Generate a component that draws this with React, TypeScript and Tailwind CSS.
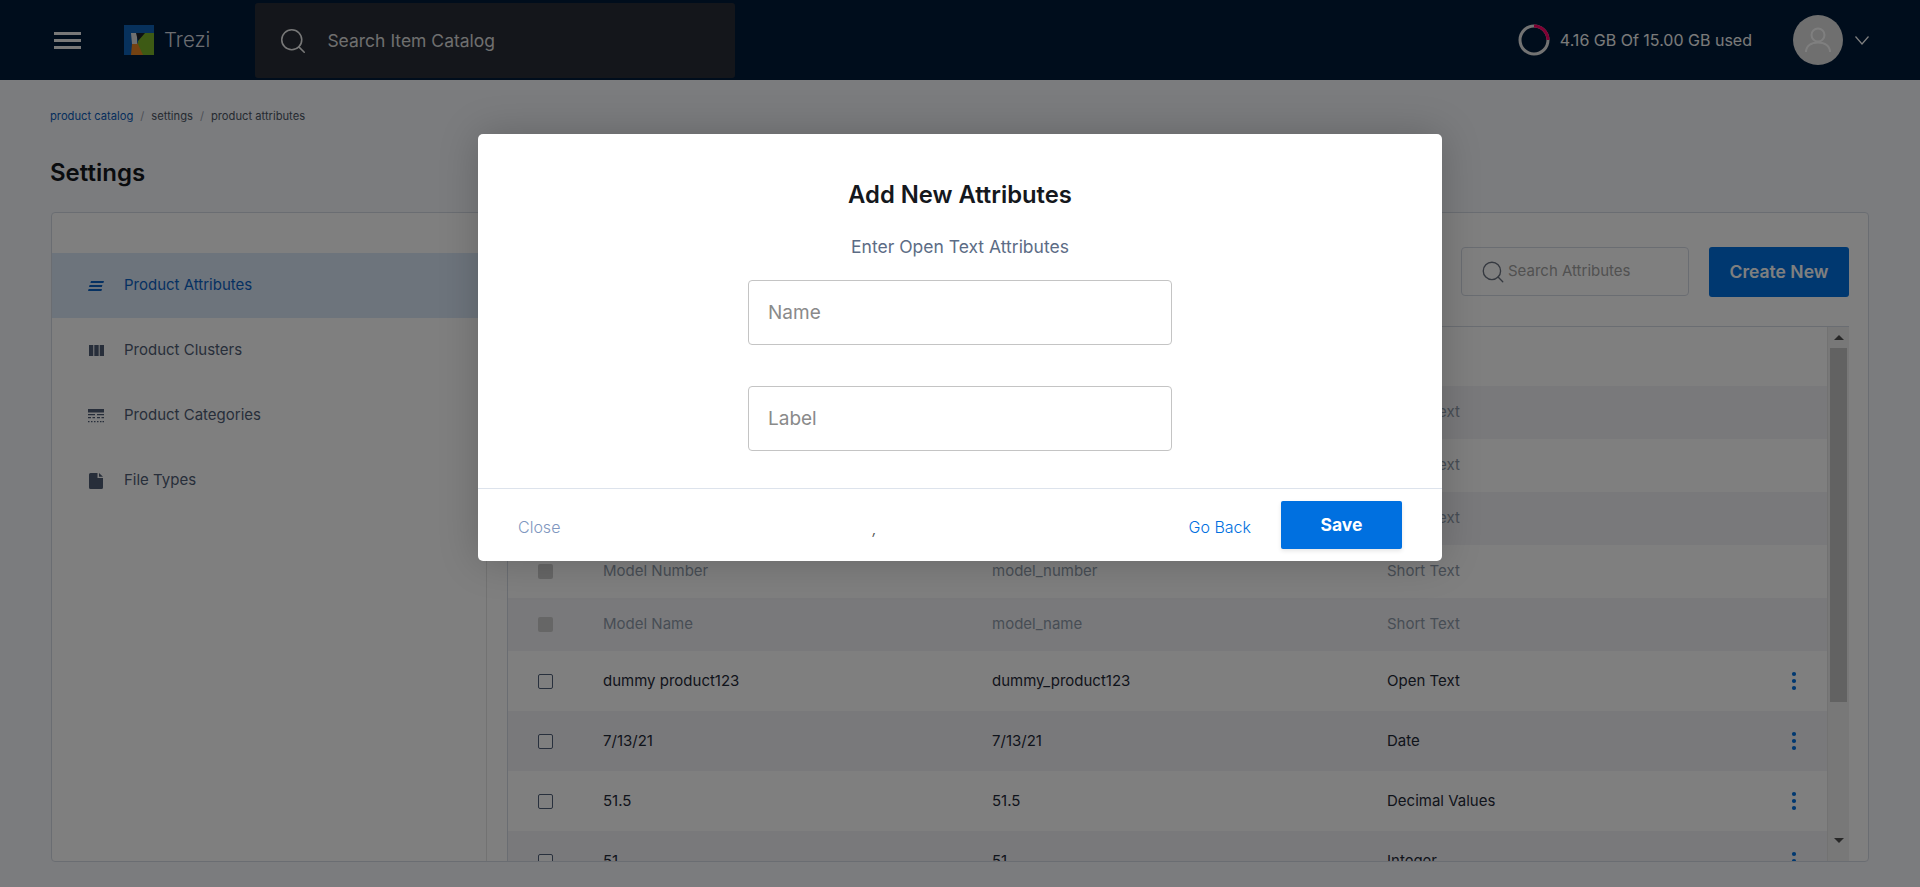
import React from 'react';
import { Search } from 'lucide-react';

const lockedRows = ['', '', '', 'Model Number', 'Model Name'];
const lockedKeys = ['', '', '', 'model_number', 'model_name'];

const rows = [
  { name: 'dummy product123', key: 'dummy_product123', type: 'Open Text' },
  { name: '7/13/21', key: '7/13/21', type: 'Date' },
  { name: '51.5', key: '51.5', type: 'Decimal Values' },
  { name: '51', key: '51', type: 'Integer' },
];

const sideItems = ['Product Attributes', 'Product Clusters', 'Product Categories', 'File Types'];

const SideIcon = ({ index }: { index: number }) => {
  if (index === 0) {
    return (
      <svg width="16" height="10" viewBox="0 0 16 10" fill="currentColor">
        <path d="M3 0h13l-.6 2H2.4zM1.6 4h12.8l-.6 2H1zM.6 8H14l-.6 2H0z" />
      </svg>
    );
  }
  if (index === 1) {
    return (
      <svg width="15" height="11" viewBox="0 0 15 11" fill="currentColor">
        <path d="M0 0h4.300v11H0zM5.300 0h4.400v11H5.300zM10.700 0H15v11h-4.300z" />
      </svg>
    );
  }
  if (index === 2) {
    return (
      <svg width="16" height="14" viewBox="0 0 16 14" fill="currentColor">
        <path d="M0 0h16v3.500H0zM0 5h7v1.200H0zM9 5h7v1.200H9zM0 8h3v1.200H0zM4.500 8H7v1.200H4.500zM9 8h3v1.200H9zM13.500 8H16v1.200h-2.500zM0 12h1.500v1.200H0zM3 12h1.500v1.200H3zM6 12h1.500v1.200H6zM9 12h1.500v1.200H9zM12 12h1.500v1.200H12zM14.500 12H16v1.200h-1.500z" />
      </svg>
    );
  }
  return (
    <svg width="14" height="16" viewBox="0 0 14 16" fill="currentColor">
      <path d="M1.500 0H8.500V5h5.500v9.500A1.500 1.500 0 0 1 12.500 16h-11A1.500 1.500 0 0 1 0 14.500v-13A1.500 1.500 0 0 1 1.500 0zM10 0l4 3.800h-4z" />
    </svg>
  );
};

const Dots = () => (
  <svg width="6" height="20" viewBox="0 0 6 20" fill="#0070e0">
    <circle cx="3" cy="3" r="2.100" />
    <circle cx="3" cy="10" r="2.100" />
    <circle cx="3" cy="17" r="2.100" />
  </svg>
);

const Logo = () => (
  <svg width="30" height="30" viewBox="0 0 30 30" className="ml-[43px] shrink-0">
    <rect width="30" height="30" fill="#0e62b8" />
    <path d="M20 8h10v22H14V15z" fill="#7ab428" />
    <path d="M7 30l1-11 5-2 6 13z" fill="#e88425" />
    <path d="M7 8h6v11H8z" fill="#e0e0e0" />
    <path d="M12 8h9l-7 8z" fill="#1a2028" />
  </svg>
);

const Header = () => (
  <header className="h-20 bg-[#001a38] flex items-center">
    <svg width="27" height="17" viewBox="0 0 27 17" fill="#f0f0f0" className="ml-[54px] shrink-0">
      <rect width="27" height="3" />
      <rect y="7" width="27" height="3" />
      <rect y="14" width="27" height="3" />
    </svg>
    <Logo />
    <span className="ml-[10px] text-[20.5px] text-[#d8dce2] font-light">Trezi</span>
    <div className="ml-[45px] w-[480px] h-[75px] mt-[1px] bg-[#282d36] rounded-[3px] flex items-center pl-[23px]">
      <Search className="w-[30px] h-[30px] text-[#f0f0f0]" strokeWidth={1.25} />
      <span className="ml-[19px] mt-[1px] text-[17.5px] text-[#dedede]">Search Item Catalog</span>
    </div>
    <div className="ml-auto flex items-center">
      <svg width="32" height="32" viewBox="0 0 32 32" fill="none">
        <circle cx="16" cy="16" r="14" stroke="#e6e6e6" strokeWidth="3" />
        <path d="M16 2A14 14 0 0 1 30 16" stroke="#ff0066" strokeWidth="3" />
      </svg>
      <span className="ml-[10px] text-[16px] text-[#f5f5f5]">4.16 GB Of 15.00 GB used</span>
      <div className="ml-[41px] w-[50px] h-[50px] rounded-full bg-[#dedede] flex items-center justify-center">
        <svg width="28" height="28" viewBox="0 0 28 28" fill="none" stroke="#ffffff" strokeWidth="2">
          <circle cx="14" cy="9" r="6.500" />
          <path d="M2 26c0-6 5-9.500 12-9.500S26 20 26 26" />
        </svg>
      </div>
      <svg width="14" height="9" viewBox="0 0 14 9" fill="none" stroke="#ffffff" strokeWidth="1.200" className="ml-[12px] mr-[51px]">
        <path d="M.5.500 7 8 13.500.5" />
      </svg>
    </div>
  </header>
);

const Table = () => (
  <div className="mt-[29px] mr-[19px] flex-1 min-h-0 border-t border-l border-[#d5dbe5] flex overflow-hidden">
    <div className="flex-1 border-r border-[#e4e4e4]">
      <div className="h-[59px]" />
      {lockedRows.map((name, i) => (
        <div key={i} className={`h-[53px] flex items-center text-[15px] text-[#8f9baa] ${i % 2 === 0 ? 'bg-[#f3f3f7]' : 'bg-white'}`}>
          <span className="ml-[30px] w-[15px] h-[15px] rounded-[2px] bg-[#cdcdcd]" />
          <span className="ml-[50px] w-[389px]">{name}</span>
          <span className="w-[395px]">{lockedKeys[i]}</span>
          <span>Short Text</span>
        </div>
      ))}
      {rows.map((row, i) => (
        <div key={row.key} className={`h-[60px] flex items-center text-[15px] text-[#1f2937] ${i % 2 === 0 ? 'bg-white' : 'bg-[#f3f3f7]'}`}>
          <span className="ml-[30px] w-[15px] h-[15px] rounded-[2px] border border-[#51607a] bg-white" />
          <span className="ml-[50px] w-[389px]">{row.name}</span>
          <span className="w-[395px]">{row.key}</span>
          <span className="w-[404px]">{row.type}</span>
          <Dots />
        </div>
      ))}
    </div>
    <div className="w-[21px] bg-[#f0f0f0] flex flex-col items-center shrink-0">
      <div className="h-[21px] flex items-center justify-center">
        <span className="w-0 h-0 border-x-[5px] border-x-transparent border-b-[5px] border-b-[#505050]" />
      </div>
      <div className="w-[17px] h-[354px] bg-[#c4c4c4]" />
      <div className="mt-auto h-[24px] flex items-start justify-center pt-[1px]">
        <span className="w-0 h-0 border-x-[5px] border-x-transparent border-t-[5px] border-t-[#505050]" />
      </div>
    </div>
  </div>
);

const Modal = () => (
  <div className="absolute left-[478px] top-[134px] w-[964px] h-[427px] bg-white rounded-[5px] shadow-[0_0_40px_rgba(0,0,0,0.2)] flex flex-col">
    <div className="flex-1 flex flex-col items-center">
      <h2 className="mt-[46px] text-[23.800px] leading-[30px] font-semibold text-[#15181d]">Add New Attributes</h2>
      <p className="mt-[25px] text-[17.5px] leading-[24px] text-[#5c6c85]">Enter Open Text Attributes</p>
      <input
        placeholder="Name"
        readOnly
        className="mt-[21px] w-[424px] h-[65px] px-[19px] text-[19px] rounded-[4px] border border-[#c4c4c4] outline-none placeholder:text-[#8a8a8a]"
      />
      <input
        placeholder="Label"
        readOnly
        className="mt-[41px] w-[424px] h-[65px] px-[19px] text-[19px] rounded-[4px] border border-[#c4c4c4] outline-none placeholder:text-[#8a8a8a]"
      />
    </div>
    <div className="h-[73px] border-t border-[#dde3ec] flex items-center pl-[40px] pr-[40px]">
      <span className="mt-[4px] text-[16px] text-[#7f97c0] font-light">Close</span>
      <span className="ml-[312px] mt-[6px] text-[14px] italic text-[#555555]">,</span>
      <span className="ml-auto mt-[4px] text-[16px] text-[#0070e0] font-light">Go Back</span>
      <button className="ml-[30px] w-[121px] h-[48px] rounded-[2px] bg-[#0070e0] text-white text-[17.5px] font-bold shadow-[0_2px_4px_rgba(0,0,0,0.1)]">Save</button>
    </div>
  </div>
);

export default function App() {
  return (
    <div className="relative w-[1920px] h-[887px] overflow-hidden bg-[#f7f9fd] font-['Inter',sans-serif]">
      <Header />
      <main className="px-[50px]">
        <nav className="pt-[29px] h-[44px] flex items-center gap-[7px] text-[11.2px] text-[#4b5563]">
          <span className="text-[#0b5cb8]">product catalog</span>
          <span className="text-[#9aa1ad]">/</span>
          <span>settings</span>
          <span className="text-[#9aa1ad]">/</span>
          <span>product attributes</span>
        </nav>
        <h1 className="mt-[33px] text-[24px] leading-[32px] font-semibold text-[#15181d]">Settings</h1>
        <div className="mt-[23px] ml-[1px] w-[1818px] h-[650px] bg-white border border-[#d5dbe5] rounded-[4px] flex overflow-hidden">
          <aside className="w-[435px] pt-[40px] border-r border-[#e4e4e4] shrink-0">
            {sideItems.map((item, i) => (
              <div key={item} className={`h-[65px] pl-[36px] flex items-center text-[15px] ${i === 0 ? 'bg-[#dbe8f8] text-[#0b62c4]' : 'text-[#4f5d75]'}`}>
                <span className="w-[16px] flex justify-center">
                  <SideIcon index={i} />
                </span>
                <span className="ml-[20px]">{item}</span>
              </div>
            ))}
          </aside>
          <section className="flex-1 min-w-0 pl-[20px] flex flex-col">
            <div className="mt-[34px] mr-[19px] flex justify-end">
              <div className="w-[228px] h-[49px] border border-[#d5dbe5] rounded-[4px] flex items-center pl-[18px]">
                <Search className="w-[26px] h-[26px] text-[#6b7280]" strokeWidth={1.25} />
                <span className="ml-[2px] text-[15px] text-[#a3a3a3]">Search Attributes</span>
              </div>
              <button className="ml-[20px] w-[140px] h-[50px] rounded-[3px] bg-[#0070e0] text-white text-[17.5px] font-semibold">Create New</button>
            </div>
            <Table />
          </section>
        </div>
      </main>
      <div className="absolute inset-0 bg-black/50" />
      <Modal />
    </div>
  );
}
